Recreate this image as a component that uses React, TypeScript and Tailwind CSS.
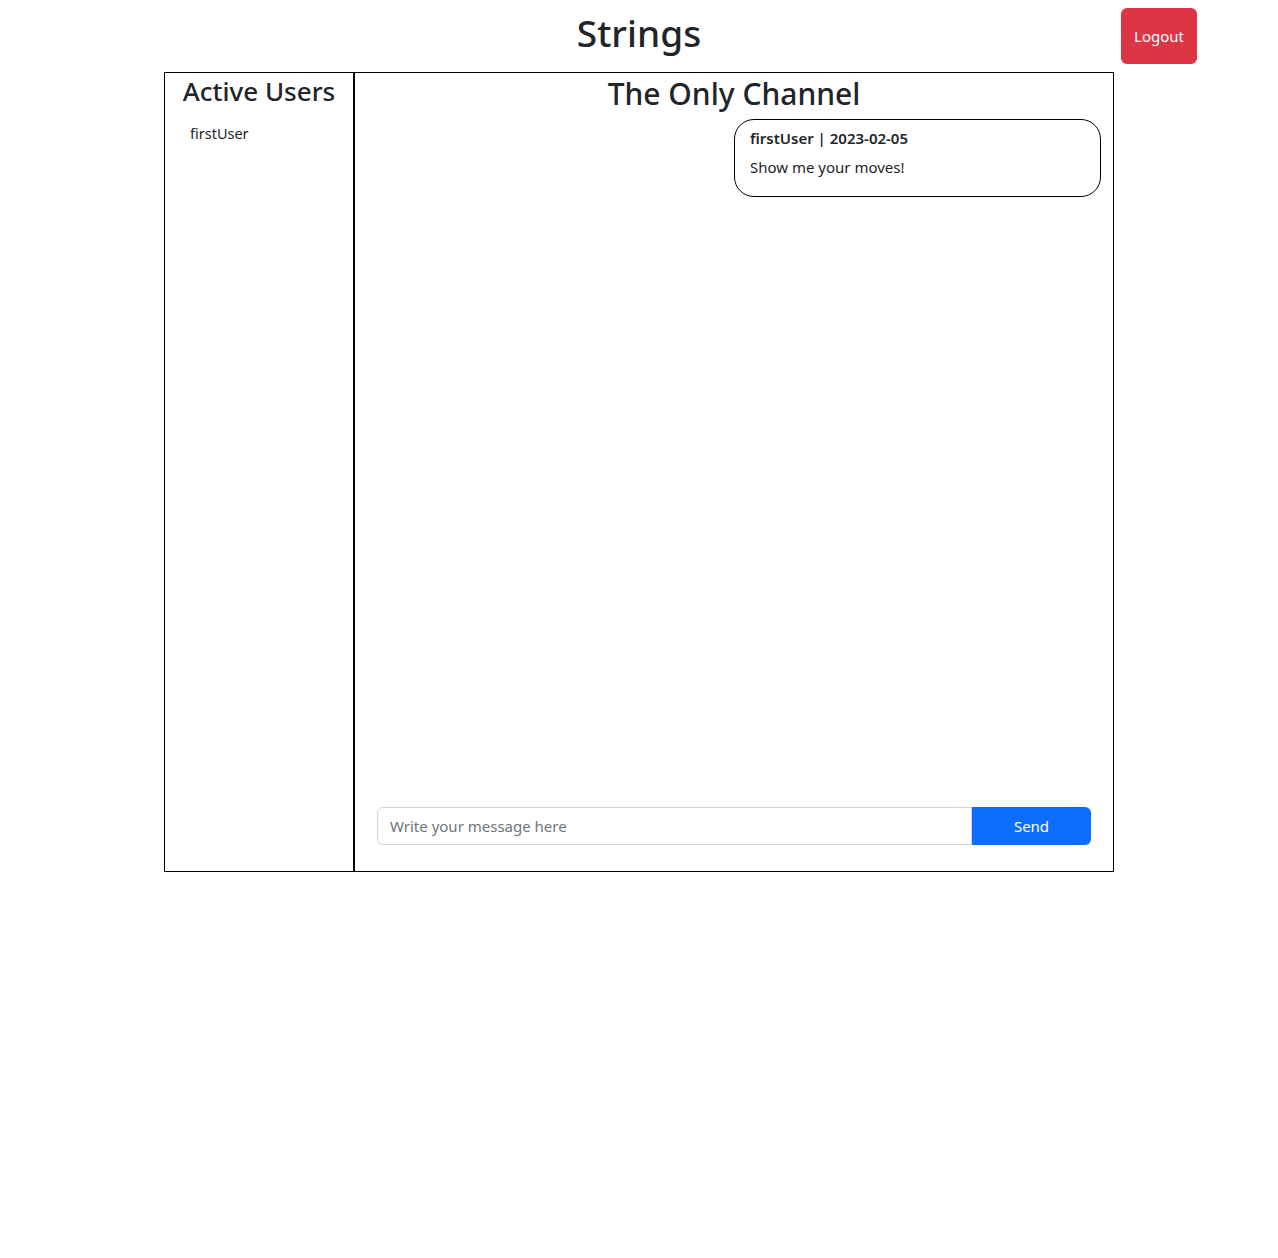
const messages = [
  { id: 1, user: "firstUser", date: "2023-02-05", text: "Show me your moves!" },
];

const activeUsers = ["firstUser"];

export default function App() {
  return (
    <div className="min-h-[1258px] w-full bg-white font-['Noto_Sans',sans-serif] text-[#212529]">
      <header className="relative flex h-[72px] items-start justify-center">
        <h1 className="mt-[11px] text-[37px] font-medium leading-[1.2]">Strings</h1>
        <button
          type="button"
          className="absolute right-[81px] top-[8px] h-[56px] w-[76px] rounded-[6px] bg-[#dc3545] text-[15px] text-white"
        >
          Logout
        </button>
      </header>

      <main className="mx-[164px] flex h-[800px] border border-black">
        <aside className="flex w-[190px] flex-col border-r-2 border-black">
          <h3 className="mt-[3px] text-center text-[26px] font-medium leading-[1.2]">
            Active Users
          </h3>
          <ul className="mt-[14px] pl-[25px]">
            {activeUsers.map((u) => (
              <li key={u} className="text-[14.5px] leading-[24px]">
                {u}
              </li>
            ))}
          </ul>
        </aside>

        <section className="flex flex-1 flex-col">
          <h2 className="mt-[3px] text-center text-[30px] font-medium leading-[1.2]">
            The Only Channel
          </h2>
          <div className="flex flex-1 flex-col items-end pr-[12px] pt-[7px]">
            {messages.map((m) => (
              <div
                key={m.id}
                className="w-[367px] rounded-[20px] border border-black px-[15px] pt-[6px] pb-[17px]"
              >
                <p className="text-[15px] font-semibold leading-[24px]">
                  {m.user} | {m.date}
                </p>
                <p className="mt-[5px] text-[15px] leading-[24px]">{m.text}</p>
              </div>
            ))}
          </div>
          <form className="mb-[26px] flex px-[22px]" onSubmit={(e) => e.preventDefault()}>
            <input
              type="text"
              placeholder="Write your message here"
              className="h-[38px] flex-1 rounded-l-[6px] border border-[#ced4da] px-[12px] text-[15px] placeholder:text-[#6c757d] outline-none"
            />
            <button
              type="submit"
              className="h-[38px] w-[119px] rounded-r-[6px] bg-[#0d6efd] text-[15px] text-white"
            >
              Send
            </button>
          </form>
        </section>
      </main>
    </div>
  );
}
